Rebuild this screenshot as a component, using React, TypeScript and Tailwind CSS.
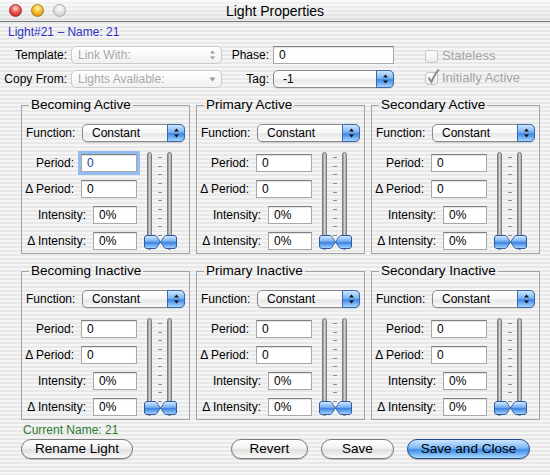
import React from "react";

const stripes =
  "bg-[repeating-linear-gradient(180deg,#f5f5f5_0px,#f5f5f5_2px,#e8e8e8_2px,#e8e8e8_4px)]";

function Arrows({ fill, single }: { fill: string; single?: boolean }) {
  if (single) {
    return (
      <svg width="7" height="5" viewBox="0 0 7 5">
        <path d="M0.5 0.5 H6.5 L3.5 4.5 Z" fill={fill} />
      </svg>
    );
  }
  return (
    <svg width="5" height="10" viewBox="0 0 5 10">
      <path d="M2.5 0.5 L5 3.5 H0 Z" fill={fill} />
      <path d="M0 6.5 H5 L2.5 9.5 Z" fill={fill} />
    </svg>
  );
}

function Popup({
  value,
  className,
  disabled,
  single,
}: {
  value: string;
  className: string;
  disabled?: boolean;
  single?: boolean;
}) {
  if (disabled) {
    return (
      <div
        className={`flex h-[18px] items-center rounded-[5px] border border-[#c9c9c9] bg-[linear-gradient(180deg,#ffffff,#f1f1f1)] text-[12px] text-[#a9a9a9] ${className}`}
      >
        <span className="flex-1 truncate pl-[6px]">{value}</span>
        <span className="flex w-[18px] items-center justify-center">
          <Arrows fill="#9a9a9a" single={single} />
        </span>
      </div>
    );
  }
  return (
    <div
      className={`flex h-[18px] items-center rounded-[5px] border border-[#8a8a8a] bg-[linear-gradient(180deg,#ffffff_0%,#f6f6f6_50%,#e6e6e6_55%,#fbfbfb_100%)] text-[12px] shadow-[0_1px_1px_rgba(0,0,0,0.12)] ${className}`}
    >
      <span className="flex-1 truncate pl-[9px]">{value}</span>
      <span className="-my-px -mr-px flex h-[18px] w-[18px] items-center justify-center rounded-r-[5px] border border-[#3a68ad] bg-[linear-gradient(180deg,#cfe6ff_0%,#7cb5f3_45%,#3f86e3_55%,#a6d6ff_100%)]">
        <Arrows fill="#111" />
      </span>
    </div>
  );
}

function Field({
  value,
  width,
  focus,
}: {
  value: string;
  width: string;
  focus?: boolean;
}) {
  return (
    <div
      className={`flex h-[18px] items-center border border-[#a8a8a8] border-t-[#7f7f7f] bg-white pl-[5px] text-[12px] shadow-[inset_0_1px_1px_rgba(0,0,0,0.12)] ${width} ${
        focus ? "text-[#1d3f8a] ring-[3px] ring-[#93bdf0]" : ""
      }`}
    >
      {value}
    </div>
  );
}

function Row({
  label,
  value,
  width,
  focus,
}: {
  label: string;
  value: string;
  width: string;
  focus?: boolean;
}) {
  return (
    <div className="flex h-[18px] items-center gap-[7px]">
      <span className="whitespace-nowrap text-[12px]">{label}</span>
      <Field value={value} width={width} focus={focus} />
    </div>
  );
}

function Thumbs() {
  return (
    <svg
      className="absolute bottom-[1px] left-0"
      width="33"
      height="14"
      viewBox="0 0 33 14"
    >
      <defs>
        <linearGradient id="thumb" x1="0" y1="0" x2="0" y2="1">
          <stop offset="0" stopColor="#dcefff" />
          <stop offset="0.45" stopColor="#74adf0" />
          <stop offset="0.55" stopColor="#3c84e0" />
          <stop offset="1" stopColor="#acd8ff" />
        </linearGradient>
      </defs>
      <path
        d="M3 0.5 H11 C13 0.5 14 4 16.5 7 C14 10 13 13.5 11 13.5 H3 C1.5 13.5 0.5 12.5 0.5 11 V3 C0.5 1.5 1.5 0.5 3 0.5 Z"
        fill="url(#thumb)"
        stroke="#2d5b9f"
      />
      <path
        d="M30 0.5 H22 C20 0.5 19 4 16.5 7 C19 10 20 13.5 22 13.5 H30 C31.5 13.5 32.5 12.5 32.5 11 V3 C32.5 1.5 31.5 0.5 30 0.5 Z"
        fill="url(#thumb)"
        stroke="#2d5b9f"
      />
    </svg>
  );
}

function Slider() {
  const ticks = Array.from({ length: 10 });
  return (
    <div className="relative -mt-[2px] ml-[7px] flex h-[98px] w-[33px] pl-[3px]">
      <div className="h-full w-[5px] rounded-full border border-[#7d7d7d] bg-[linear-gradient(90deg,#8e8e8e,#d6d6d6_55%,#a3a3a3)]" />
      <div className="flex h-full w-[15px] flex-col items-center justify-between pt-[5px] pb-[14px]">
        {ticks.map((_, i) => (
          <div key={i} className="h-px w-[4px] bg-[#8f8f8f]" />
        ))}
      </div>
      <div className="h-full w-[5px] rounded-full border border-[#7d7d7d] bg-[linear-gradient(90deg,#8e8e8e,#d6d6d6_55%,#a3a3a3)]" />
      <Thumbs />
    </div>
  );
}

function Panel({ title, focus }: { title: string; focus?: boolean }) {
  return (
    <fieldset className="min-w-0 border border-[#a3a3a3] px-[4px] pt-0 pb-[3px]">
      <legend className="ml-[3px] px-[2px] text-[13.5px] leading-[16px]">
        {title}
      </legend>
      <div className="mt-[11px] flex items-center justify-between">
        <span className="text-[12px]">Function:</span>
        <Popup value="Constant" className="w-[103px]" />
      </div>
      <div className="mt-[12px] flex items-start">
        <div className="flex w-[111px] flex-col items-end gap-[8px]">
          <Row label="Period:" value="0" width="w-[56px]" focus={focus} />
          <Row label="Δ Period:" value="0" width="w-[56px]" />
          <Row label="Intensity:" value="0%" width="w-[44px]" />
          <Row label="Δ Intensity:" value="0%" width="w-[44px]" />
        </div>
        <Slider />
      </div>
    </fieldset>
  );
}

function Check({ label, checked }: { label: string; checked?: boolean }) {
  return (
    <div className="flex h-[18px] items-center gap-[4px] text-[13px] text-[#a5a5a5]">
      <span className="relative h-[13px] w-[13px] rounded-[3px] border border-[#c4c4c4] bg-[linear-gradient(180deg,#ffffff,#ebebeb)]">
        {checked && (
          <svg
            className="absolute -top-[4px] left-[1px]"
            width="13"
            height="15"
            viewBox="0 0 13 15"
          >
            <path
              d="M1.5 8.5 L4.5 13 C6.5 8 8.5 4 12 0.5"
              fill="none"
              stroke="#8c8c8c"
              strokeWidth="2"
            />
          </svg>
        )}
      </span>
      {label}
    </div>
  );
}

function Button({
  label,
  width,
  primary,
}: {
  label: string;
  width: string;
  primary?: boolean;
}) {
  return (
    <div
      className={`flex h-[20px] items-center justify-center rounded-full border text-[13.5px] shadow-[0_1px_1px_rgba(0,0,0,0.2)] ${width} ${
        primary
          ? "border-[#23498a] bg-[linear-gradient(180deg,#cde6ff_0%,#7db7f5_45%,#3f8be6_55%,#aadcff_100%)]"
          : "border-[#7a7a7a] bg-[linear-gradient(180deg,#ffffff_0%,#f2f2f2_45%,#dfdfdf_55%,#fbfbfb_100%)]"
      }`}
    >
      {label}
    </div>
  );
}

export default function App() {
  return (
    <div
      className={`h-[475px] w-[550px] overflow-hidden font-['Liberation_Sans',Arial,sans-serif] text-black ${stripes}`}
    >
      {/* title bar */}
      <div className="grid h-[22px] grid-cols-[70px_1fr_70px] items-center border-b border-[#7b7b7b] bg-[linear-gradient(180deg,rgba(255,255,255,0.5),rgba(0,0,0,0.04))]">
        <div className="flex gap-[9px] pl-[9px]">
          <span className="h-[13px] w-[13px] rounded-full border border-[#a5352e] bg-[radial-gradient(circle_at_50%_30%,#ffd8d0_0%,#f0675d_40%,#c4241b_85%)]" />
          <span className="h-[13px] w-[13px] rounded-full border border-[#b07a12] bg-[radial-gradient(circle_at_50%_30%,#fff5c8_0%,#f8c536_40%,#d98e0b_85%)]" />
          <span className="h-[13px] w-[13px] rounded-full border border-[#ababab] bg-[radial-gradient(circle_at_50%_30%,#ffffff_0%,#e4e4e4_45%,#c6c6c6_90%)]" />
        </div>
        <div className="text-center text-[14px] leading-[16px]">Light Properties</div>
        <div />
      </div>

      <div className="mt-[3px] pl-[8px] text-[12px] leading-[14px] text-[#2f32c4]">
        Light#21 – Name: 21
      </div>

      {/* top form */}
      <div className="mt-[7px] grid grid-cols-[67px_151px_43px_121px_1fr] grid-rows-[18px_18px] items-center gap-x-[4px] gap-y-[6px] text-[12px]">
        <span className="text-right">Template:</span>
        <Popup value="Link With:" className="w-[151px]" disabled />
        <span className="text-right">Phase:</span>
        <Field value="0" width="w-[121px]" />
        <div className="row-span-2 flex flex-col gap-[4px] self-start pt-[1px] pl-[27px]">
          <Check label="Stateless" />
          <Check label="Initially Active" checked />
        </div>
        <span className="text-right">Copy From:</span>
        <Popup value="Lights Avaliable:" className="w-[151px]" disabled single />
        <span className="text-right">Tag:</span>
        <Popup value="-1" className="w-[121px]" />
      </div>

      {/* panels */}
      <div className="mt-[9px] grid grid-cols-3 gap-x-[6px] gap-y-[9px] pr-[10px] pl-[21px]">
        <Panel title="Becoming Active" focus />
        <Panel title="Primary Active" />
        <Panel title="Secondary Active" />
        <Panel title="Becoming Inactive" />
        <Panel title="Primary Inactive" />
        <Panel title="Secondary Inactive" />
      </div>

      <div className="mt-[3px] pl-[23px] text-[12px] leading-[14px] text-[#2f7a2f]">
        Current Name: 21
      </div>
      <div className="mt-[2px] flex items-center pr-[20px] pl-[21px]">
        <Button label="Rename Light" width="w-[112px]" />
        <div className="ml-auto flex gap-[13px]">
          <Button label="Revert" width="w-[77px]" />
          <Button label="Save" width="w-[73px]" />
          <Button label="Save and Close" width="w-[123px]" primary />
        </div>
      </div>
    </div>
  );
}
